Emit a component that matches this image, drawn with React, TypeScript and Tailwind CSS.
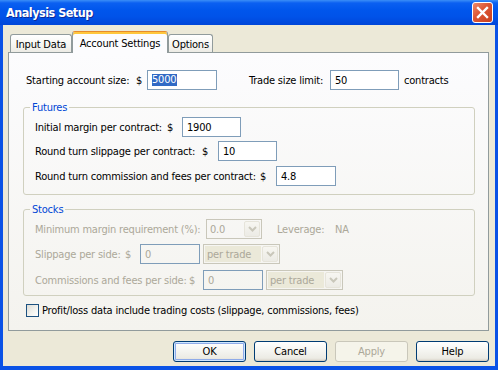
import React from "react";

function TextBox({ w, value, disabled, selected }: { w: string; value: string; disabled?: boolean; selected?: boolean }) {
  return (
    <div
      className={`h-[20px] ${w} shrink-0 border border-[#7f9db9] flex items-center pl-[4px] leading-[13px] ${
        disabled ? "text-[#aca899]" : "bg-white text-black"
      }`}
    >
      {selected ? <span className="bg-[#316ac5] text-white leading-[12px] pr-[1px]">{value}</span> : value}
    </div>
  );
}

function Combo({ w, value, beige }: { w: string; value: string; beige?: boolean }) {
  return (
    <div className={`h-[20px] ${w} shrink-0 border border-[#c9c7ba] flex items-stretch p-[1px] gap-[1px]`}>
      <div className={`flex-1 flex items-center pl-[2px] text-[#aca899] leading-[13px] whitespace-nowrap ${beige ? "bg-[#ebe9d9]" : ""}`}>{value}</div>
      <div className="w-[16px] rounded-[2px] border border-[#e6e4da] bg-[linear-gradient(to_bottom,#f7f6f1,#ecebe5)] flex items-center justify-center">
        <svg width="9" height="6" viewBox="0 0 9 6">
          <polyline points="1,1 4.5,4.5 8,1" fill="none" stroke="#c9c7ba" strokeWidth="2" />
        </svg>
      </div>
    </div>
  );
}

function Button({ label, primary, disabled }: { label: string; primary?: boolean; disabled?: boolean }) {
  const base = "w-[73px] h-[21px] rounded-[3px] border flex items-center justify-center leading-[13px]";
  if (disabled)
    return <div className={`${base} border-[#c9c7ba] bg-[#f5f4ea] text-[#aca899]`}>{label}</div>;
  return (
    <div
      className={`${base} border-[#003c74] bg-[linear-gradient(to_bottom,#ffffff,#f5f5f1_45%,#ecebe4_85%,#d8d2c6)] text-black ${
        primary ? "shadow-[inset_0_0_0_1px_#cee7ff,inset_0_0_0_2px_#8fabe9]" : "shadow-[inset_0_-1px_0_#d6d0c5]"
      }`}
    >
      {label}
    </div>
  );
}

function Lbl({ w, text, pr, dollar = true }: { w: string; text: string; pr: string; dollar?: boolean }) {
  return (
    <div className={`${w} shrink-0 flex justify-between ${pr} leading-[13px] whitespace-nowrap`}>
      <span>{text}</span>
      {dollar && <span>$</span>}
    </div>
  );
}

export default function App() {
  return (
    <div className="w-[498px] h-[370px] flex flex-col bg-[#0a52e6] font-['DejaVu_Sans_Condensed','DejaVu_Sans',sans-serif] [font-stretch:condensed] text-[11px] tracking-[-0.2px] text-black select-none">
      {/* Title bar */}
      <div className="h-[25px] shrink-0 flex items-center justify-between pl-[6px] pr-[5px] bg-[linear-gradient(to_bottom,#3b8ef7_0px,#0b60f1_3px,#0056ec_10px,#0052e8_17px,#0046d8_25px)]">
        <span className="text-white font-bold text-[12.5px] tracking-[-0.5px] leading-[16px] [text-shadow:1px_1px_0_#0c2a9a]">Analysis Setup</span>
        <div className="w-[21px] h-[21px] rounded-[3px] border border-white bg-[linear-gradient(135deg,#ee8a6c,#dc5533_45%,#c8401f)] flex items-center justify-center">
          <svg width="13" height="13" viewBox="0 0 13 13">
            <path d="M2 2 L11 11 M11 2 L2 11" stroke="white" strokeWidth="2.4" strokeLinecap="square" />
          </svg>
        </div>
      </div>

      {/* Body */}
      <div className="flex-1 ml-[3px] mr-[3px] mb-[4px] bg-[#ece9d8] flex flex-col pl-[5px] pr-[6px]">
        {/* Tabs */}
        <div className="relative z-10 flex items-end h-[22px] mt-[6px] pl-[2px] whitespace-nowrap">
          <div className="w-[62px] h-[18px] mb-[1px] border border-b-0 border-[#919b9c] rounded-t-[3px] bg-[linear-gradient(to_bottom,#ffffff,#f7f7f4_50%,#ecebe5)] flex items-center justify-center leading-[13px] pt-[1px]">
            Input Data
          </div>
          <div className="w-[96px] h-[22px] border border-b-0 border-[#919b9c] border-t-[#e68b2c] rounded-t-[3px] bg-[#fcfcfe] shadow-[inset_0_2px_0_#ffc73c] flex items-center justify-center leading-[13px] pt-[1px]">
            Account Settings
          </div>
          <div className="w-[45px] h-[18px] mb-[1px] border border-b-0 border-[#919b9c] rounded-t-[3px] bg-[linear-gradient(to_bottom,#ffffff,#f7f7f4_50%,#ecebe5)] flex items-center justify-center leading-[13px] pt-[1px]">
            Options
          </div>
        </div>

        {/* Panel */}
        <div className="-mt-[1px] h-[279px] border border-[#919b9c] bg-[linear-gradient(to_bottom,#fcfcfe,#f4f3ee)] flex flex-col pl-[14px]">
          {/* Row 1 */}
          <div className="mt-[17px] ml-[3px] h-[20px] flex items-center">
            <Lbl w="w-[121px]" text="Starting account size:" pr="pr-[5px]" />
            <TextBox w="w-[70px]" value="5000" selected />
            <div className="ml-[32px] w-[81px] shrink-0 leading-[13px] whitespace-nowrap">Trade size limit:</div>
            <TextBox w="w-[69px]" value="50" />
            <span className="ml-[5px] leading-[13px]">contracts</span>
          </div>

          {/* Futures */}
          <fieldset className="mt-[11px] w-[452px] border border-[#d0d0bf] rounded-[3px] px-0 pb-[8px]">
            <legend className="ml-[6px] px-[2px] text-[#0046d5] leading-[13px]">Futures</legend>
            <div className="mt-[3px] ml-[11px] h-[20px] flex items-center">
              <Lbl w="w-[147px]" text="Initial margin per contract:" pr="pr-[9px]" />
              <TextBox w="w-[59px]" value="1900" />
            </div>
            <div className="mt-[4px] ml-[11px] h-[20px] flex items-center">
              <Lbl w="w-[183px]" text="Round turn slippage per contract:" pr="pr-[10px]" />
              <TextBox w="w-[59px]" value="10" />
            </div>
            <div className="mt-[5px] ml-[11px] h-[20px] flex items-center">
              <Lbl w="w-[241px]" text="Round turn commission and fees per contract:" pr="pr-[10px]" />
              <TextBox w="w-[60px]" value="4.8" />
            </div>
          </fieldset>

          {/* Stocks */}
          <fieldset className="mt-[8px] w-[452px] border border-[#d0d0bf] rounded-[3px] px-0 pb-[5px] text-[#aca899]">
            <legend className="ml-[6px] px-[2px] text-[#0046d5] leading-[13px]">Stocks</legend>
            <div className="mt-[3px] ml-[11px] h-[20px] flex items-center">
              <Lbl w="w-[171px]" text="Minimum margin requirement (%):" pr="pr-0" dollar={false} />
              <Combo w="w-[56px]" value="0.0" />
              <div className="ml-[15px] w-[58px] shrink-0 leading-[13px]">Leverage:</div>
              <span className="leading-[13px]">NA</span>
            </div>
            <div className="mt-[5px] ml-[11px] h-[20px] flex items-center">
              <Lbl w="w-[105px]" text="Slippage per side:" pr="pr-[9px]" />
              <TextBox w="w-[60px]" value="0" disabled />
              <div className="ml-[3px]">
                <Combo w="w-[77px]" value="per trade" beige />
              </div>
            </div>
            <div className="mt-[6px] ml-[11px] h-[20px] flex items-center">
              <Lbl w="w-[168px]" text="Commissions and fees per side:" pr="pr-[8px]" />
              <TextBox w="w-[60px]" value="0" disabled />
              <div className="ml-[3px]">
                <Combo w="w-[77px]" value="per trade" beige />
              </div>
            </div>
          </fieldset>

          {/* Checkbox */}
          <div className="mt-[8px] ml-[3px] h-[13px] flex items-center whitespace-nowrap">
            <div className="w-[13px] h-[13px] shrink-0 border border-[#1c5180] bg-[linear-gradient(135deg,#dcdcd6,#f4f4f0_60%,#ffffff)]" />
            <span className="ml-[3px] leading-[13px]">Profit/loss data include trading costs (slippage, commissions, fees)</span>
          </div>
        </div>

        {/* Buttons */}
        <div className="mt-[10px] flex justify-end gap-[8px]">
          <Button label="OK" primary />
          <Button label="Cancel" />
          <Button label="Apply" disabled />
          <Button label="Help" />
        </div>
      </div>
    </div>
  );
}
